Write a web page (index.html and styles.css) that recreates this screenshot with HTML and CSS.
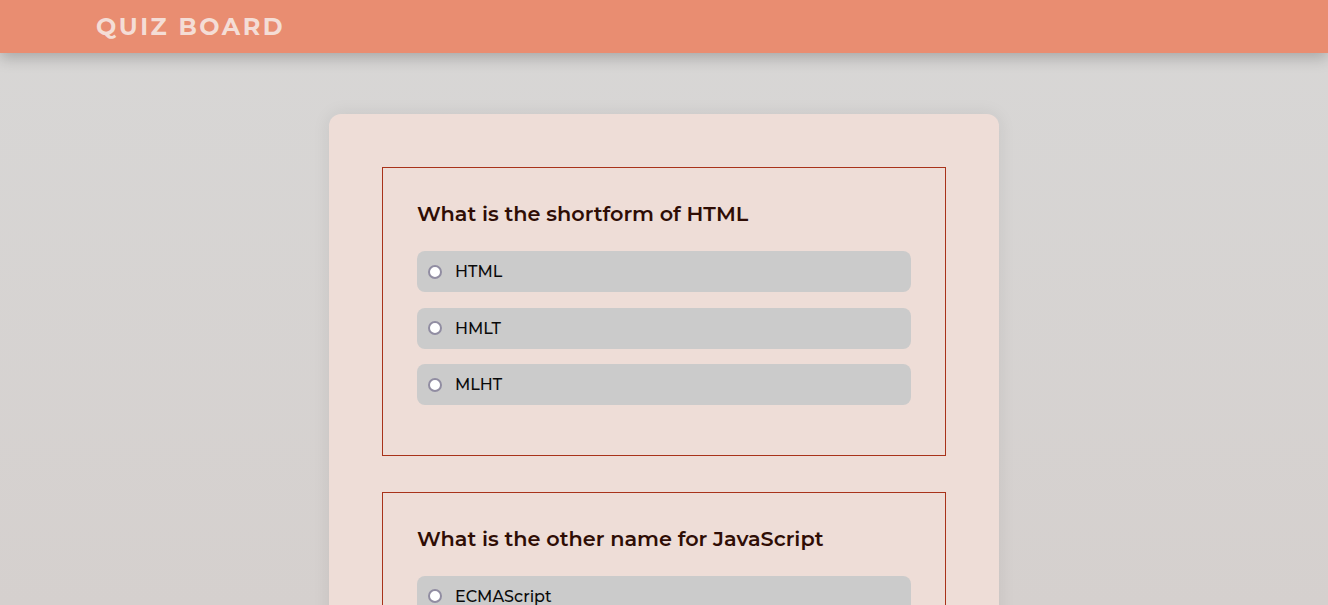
FILE: index.html
```html
<!DOCTYPE html>
<html lang="en">
<head>
<meta charset="utf-8">
<title>Quiz Board</title>
<link rel="stylesheet" href="styles.css">
</head>
<body>
<header class="topbar">
  <h1 class="brand">QUIZ BOARD</h1>
</header>
<main class="page">
  <form class="card">
    <section class="question">
      <h3 class="q-title">What is the shortform of HTML</h3>
      <label class="option"><input type="radio" name="q1"><span>HTML</span></label>
      <label class="option"><input type="radio" name="q1"><span>HMLT</span></label>
      <label class="option"><input type="radio" name="q1"><span>MLHT</span></label>
    </section>
    <section class="question">
      <h3 class="q-title">What is the other name for JavaScript</h3>
      <label class="option"><input type="radio" name="q2"><span>ECMAScript</span></label>
      <label class="option"><input type="radio" name="q2"><span>Java</span></label>
      <label class="option"><input type="radio" name="q2"><span>TypeScript</span></label>
    </section>
  </form>
</main>
</body>
</html>
```
FILE: styles.css
```css
* { box-sizing: border-box; }
html, body { margin: 0; padding: 0; }
body {
  font-family: Montserrat, "Open Sans", sans-serif;
  background: linear-gradient(180deg, #d8d7d6 0%, #d5d0ce 100%);
  background-attachment: fixed;
  min-height: 100vh;
}
.topbar {
  height: 53px;
  background: #e98d71;
  box-shadow: 0 5px 14px rgba(0, 0, 0, 0.22);
  display: flex;
  align-items: center;
  padding-left: 96px;
  position: relative;
  z-index: 1;
}
.brand {
  margin: 0;
  font-size: 24px;
  font-weight: 700;
  letter-spacing: 2.5px;
  color: #f4ddd6;
}
.page {
  display: flex;
  justify-content: center;
  padding-top: 61px;
}
.card {
  width: 670px;
  background: #eeddd7;
  border-radius: 12px;
  padding: 53px;
  box-shadow: 0 0 18px rgba(0, 0, 0, 0.08);
  display: flex;
  flex-direction: column;
  gap: 36px;
}
.question {
  border: 1px solid #a8321a;
  padding: 34px 34px 34px 34px;
  display: flex;
  flex-direction: column;
}
.q-title {
  margin: 0 0 25px 0;
  font-size: 20.8px;
  line-height: 24px;
  font-weight: 600;
  color: #2f0d05;
}
.option {
  display: flex;
  align-items: center;
  gap: 13px;
  height: 41px;
  padding: 0 11px;
  margin-bottom: 15.5px;
  background: #cbcbcb;
  border-radius: 8px;
  font-size: 16px;
  font-weight: 500;
  color: #0a0a0a;
}
.option input {
  -webkit-appearance: none;
  appearance: none;
  margin: 0;
  width: 14px;
  height: 14px;
  border: 2px solid #918da2;
  border-radius: 50%;
  background: #fff;
  flex: none;
}
```
